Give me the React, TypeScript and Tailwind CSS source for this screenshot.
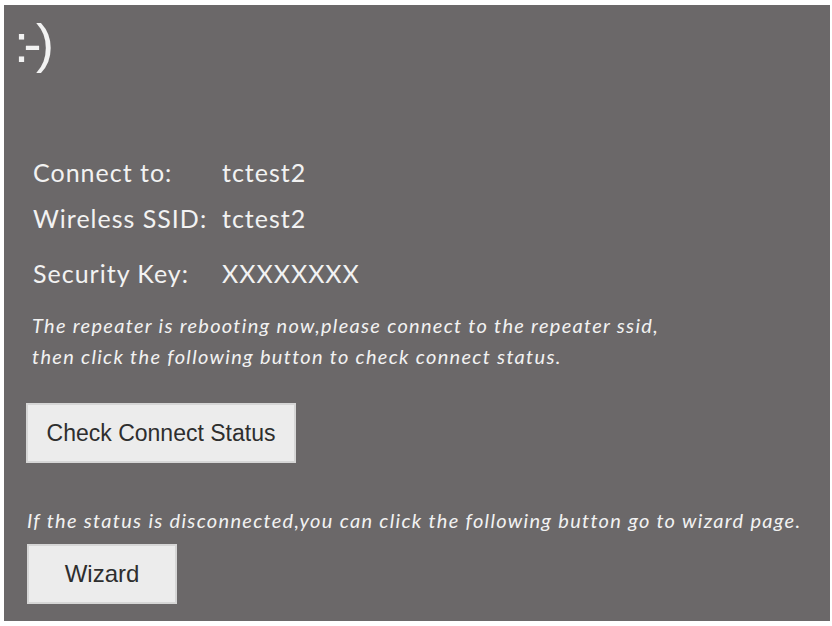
import React from "react";

const rows = [
  { label: "Connect to:", value: "tctest2" },
  { label: "Wireless SSID:", value: "tctest2" },
  { label: "Security Key:", value: "XXXXXXXX" },
];

export default function App() {
  return (
    <div className="w-[832px] h-[626px] bg-white pt-[5px] pb-[5px] pl-[4px] pr-[2px]">
      <div className="h-full flex flex-col items-start bg-[#6b6869] text-[#f2f2f2] font-['Lato',sans-serif] pl-[10px]">
        {/* big smiley */}
        <div className="mt-[6px] pl-[0px] text-[54px] leading-[64px] tracking-[-5.5px] font-['Liberation_Sans',sans-serif]">
          :-)
        </div>

        <div className="mt-[82px] pl-[19px] flex flex-col">
          {rows.map((r, i) => (
            <div
              key={r.label}
              className={`flex items-center text-[25px] leading-[30px] tracking-[1px] ${i === 2 ? "mt-[25px]" : i === 1 ? "mt-[16px]" : ""}`}
            >
              <span className="w-[189px]">{r.label}</span>
              <span>{r.value}</span>
            </div>
          ))}
        </div>

        <div className="mt-[22px] pl-[18px] italic text-[20px] leading-[31px] tracking-[1.3px]">
          <p>The repeater is rebooting now,please connect to the repeater ssid,</p>
          <p>then click the following button to check connect status.</p>
        </div>

        <button className="mt-[31px] ml-[12px] w-[270px] h-[60px] bg-[#ececec] border-2 border-[#d6d6d6] text-[#2e2e2e] font-['Liberation_Sans',sans-serif] text-[23px]">
          Check Connect Status
        </button>

        <p className="mt-[43px] pl-[13px] italic text-[20px] leading-[28px] tracking-[1.3px]">
          If the status is disconnected,you can click the following button go to wizard page.
        </p>

        <button className="mt-[10px] ml-[13px] w-[150px] h-[60px] bg-[#ececec] border-2 border-[#d6d6d6] text-[#2e2e2e] font-['Liberation_Sans',sans-serif] text-[24px]">
          Wizard
        </button>
      </div>
    </div>
  );
}
